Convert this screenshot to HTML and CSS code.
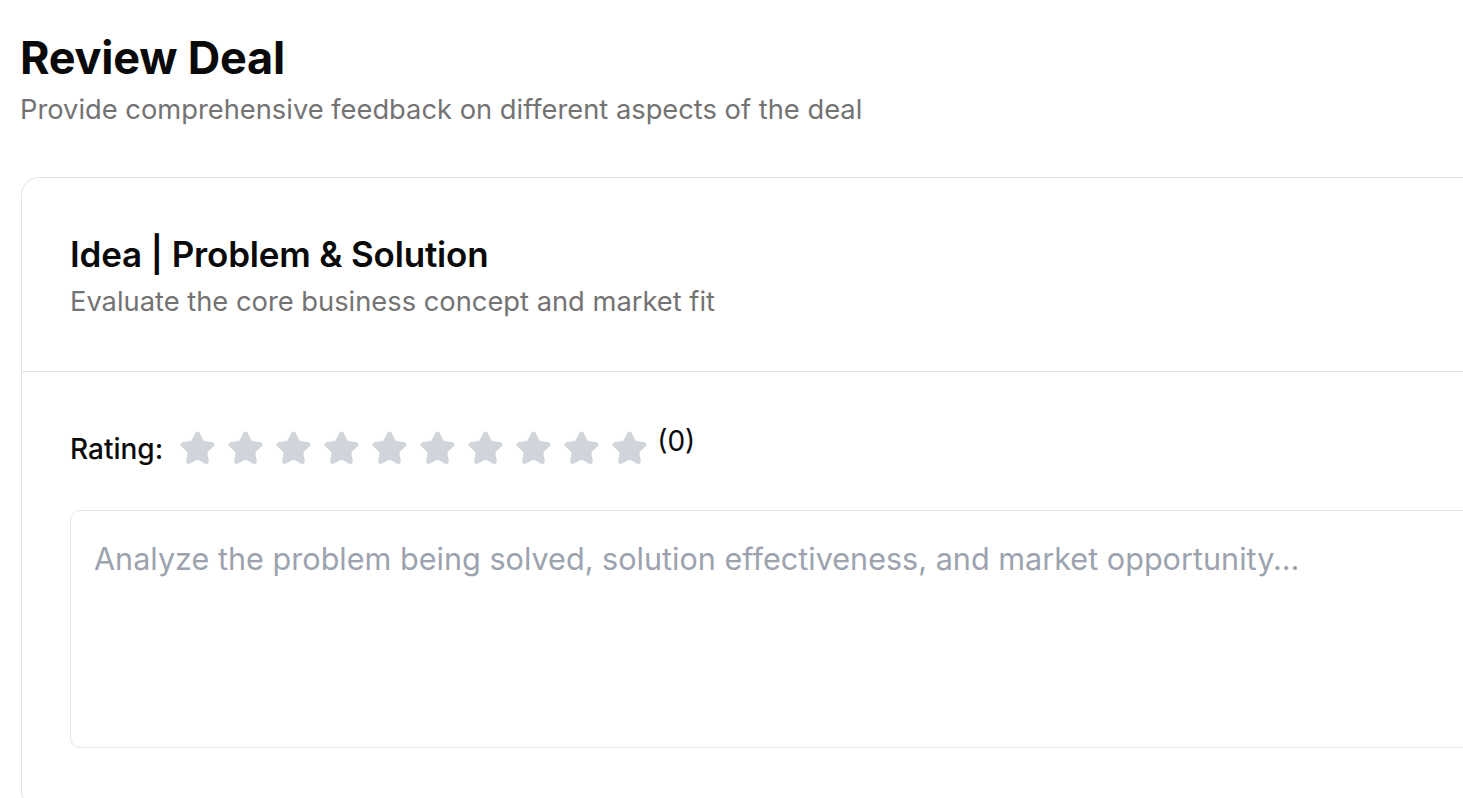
FILE: index.html
```html
<!DOCTYPE html>
<html lang="en">
<head>
<meta charset="utf-8">
<title>Review Deal</title>
<link rel="stylesheet" href="styles.css">
</head>
<body>
<main class="page">
  <header class="page-header">
    <h1 class="page-title">Review Deal</h1>
    <p class="page-subtitle">Provide comprehensive feedback on different aspects of the deal</p>
  </header>

  <section class="card">
    <div class="card-header">
      <h2 class="card-title">Idea | Problem &amp; Solution</h2>
      <p class="card-desc">Evaluate the core business concept and market fit</p>
    </div>
    <div class="card-body">
      <div class="rating-row">
        <span class="rating-label">Rating:</span>
        <div class="stars">
          <svg class="star" viewBox="0 0 24 24"><path d="M11.525 2.295a.53.53 0 0 1 .95 0l2.31 4.679a2.123 2.123 0 0 0 1.595 1.16l5.166.756a.53.53 0 0 1 .294.904l-3.736 3.638a2.123 2.123 0 0 0-.611 1.878l.882 5.14a.53.53 0 0 1-.771.56l-4.618-2.428a2.122 2.122 0 0 0-1.973 0L6.396 21.01a.53.53 0 0 1-.77-.56l.881-5.139a2.122 2.122 0 0 0-.611-1.879L2.16 9.795a.53.53 0 0 1 .294-.906l5.165-.755a2.122 2.122 0 0 0 1.597-1.16z"/></svg>
          <svg class="star" viewBox="0 0 24 24"><path d="M11.525 2.295a.53.53 0 0 1 .95 0l2.31 4.679a2.123 2.123 0 0 0 1.595 1.16l5.166.756a.53.53 0 0 1 .294.904l-3.736 3.638a2.123 2.123 0 0 0-.611 1.878l.882 5.14a.53.53 0 0 1-.771.56l-4.618-2.428a2.122 2.122 0 0 0-1.973 0L6.396 21.01a.53.53 0 0 1-.77-.56l.881-5.139a2.122 2.122 0 0 0-.611-1.879L2.16 9.795a.53.53 0 0 1 .294-.906l5.165-.755a2.122 2.122 0 0 0 1.597-1.160z"/></svg>
          <svg class="star" viewBox="0 0 24 24"><path d="M11.525 2.295a.53.53 0 0 1 .95 0l2.31 4.679a2.123 2.123 0 0 0 1.595 1.16l5.166.756a.53.53 0 0 1 .294.904l-3.736 3.638a2.123 2.123 0 0 0-.611 1.878l.882 5.14a.53.53 0 0 1-.771.56l-4.618-2.428a2.122 2.122 0 0 0-1.973 0L6.396 21.01a.53.53 0 0 1-.77-.56l.881-5.139a2.122 2.122 0 0 0-.611-1.879L2.16 9.795a.53.53 0 0 1 .294-.906l5.165-.755a2.122 2.122 0 0 0 1.597-1.16z"/></svg>
          <svg class="star" viewBox="0 0 24 24"><path d="M11.525 2.295a.53.53 0 0 1 .95 0l2.31 4.679a2.123 2.123 0 0 0 1.595 1.16l5.166.756a.53.53 0 0 1 .294.904l-3.736 3.638a2.123 2.123 0 0 0-.611 1.878l.882 5.14a.53.53 0 0 1-.771.56l-4.618-2.428a2.122 2.122 0 0 0-1.973 0L6.396 21.01a.53.53 0 0 1-.77-.56l.881-5.139a2.122 2.122 0 0 0-.611-1.879L2.16 9.795a.53.53 0 0 1 .294-.906l5.165-.755a2.122 2.122 0 0 0 1.597-1.16z"/></svg>
          <svg class="star" viewBox="0 0 24 24"><path d="M11.525 2.295a.53.53 0 0 1 .95 0l2.31 4.679a2.123 2.123 0 0 0 1.595 1.16l5.166.756a.53.53 0 0 1 .294.904l-3.736 3.638a2.123 2.123 0 0 0-.611 1.878l.882 5.14a.53.53 0 0 1-.771.56l-4.618-2.428a2.122 2.122 0 0 0-1.973 0L6.396 21.01a.53.53 0 0 1-.77-.56l.881-5.139a2.122 2.122 0 0 0-.611-1.879L2.16 9.795a.53.53 0 0 1 .294-.906l5.165-.755a2.122 2.122 0 0 0 1.597-1.16z"/></svg>
          <svg class="star" viewBox="0 0 24 24"><path d="M11.525 2.295a.53.53 0 0 1 .95 0l2.31 4.679a2.123 2.123 0 0 0 1.595 1.16l5.166.756a.53.53 0 0 1 .294.904l-3.736 3.638a2.123 2.123 0 0 0-.611 1.878l.882 5.14a.53.53 0 0 1-.771.56l-4.618-2.428a2.122 2.122 0 0 0-1.973 0L6.396 21.01a.53.53 0 0 1-.77-.56l.881-5.139a2.122 2.122 0 0 0-.611-1.879L2.16 9.795a.53.53 0 0 1 .294-.906l5.165-.755a2.122 2.122 0 0 0 1.597-1.16z"/></svg>
          <svg class="star" viewBox="0 0 24 24"><path d="M11.525 2.295a.53.53 0 0 1 .95 0l2.31 4.679a2.123 2.123 0 0 0 1.595 1.16l5.166.756a.53.53 0 0 1 .294.904l-3.736 3.638a2.123 2.123 0 0 0-.611 1.878l.882 5.14a.53.53 0 0 1-.771.56l-4.618-2.428a2.122 2.122 0 0 0-1.973 0L6.396 21.01a.53.53 0 0 1-.77-.56l.881-5.139a2.122 2.122 0 0 0-.611-1.879L2.16 9.795a.53.53 0 0 1 .294-.906l5.165-.755a2.122 2.122 0 0 0 1.597-1.16z"/></svg>
          <svg class="star" viewBox="0 0 24 24"><path d="M11.525 2.295a.53.53 0 0 1 .95 0l2.31 4.679a2.123 2.123 0 0 0 1.595 1.16l5.166.756a.53.53 0 0 1 .294.904l-3.736 3.638a2.123 2.123 0 0 0-.611 1.878l.882 5.14a.53.53 0 0 1-.771.56l-4.618-2.428a2.122 2.122 0 0 0-1.973 0L6.396 21.01a.53.53 0 0 1-.77-.56l.881-5.139a2.122 2.122 0 0 0-.611-1.879L2.16 9.795a.53.53 0 0 1 .294-.906l5.165-.755a2.122 2.122 0 0 0 1.597-1.16z"/></svg>
          <svg class="star" viewBox="0 0 24 24"><path d="M11.525 2.295a.53.53 0 0 1 .95 0l2.31 4.679a2.123 2.123 0 0 0 1.595 1.16l5.166.756a.53.53 0 0 1 .294.904l-3.736 3.638a2.123 2.123 0 0 0-.611 1.878l.882 5.14a.53.53 0 0 1-.771.56l-4.618-2.428a2.122 2.122 0 0 0-1.973 0L6.396 21.01a.53.53 0 0 1-.77-.56l.881-5.139a2.122 2.122 0 0 0-.611-1.879L2.16 9.795a.53.53 0 0 1 .294-.906l5.165-.755a2.122 2.122 0 0 0 1.597-1.16z"/></svg>
          <svg class="star" viewBox="0 0 24 24"><path d="M11.525 2.295a.53.53 0 0 1 .95 0l2.31 4.679a2.123 2.123 0 0 0 1.595 1.16l5.166.756a.53.53 0 0 1 .294.904l-3.736 3.638a2.123 2.123 0 0 0-.611 1.878l.882 5.14a.53.53 0 0 1-.771.56l-4.618-2.428a2.122 2.122 0 0 0-1.973 0L6.396 21.01a.53.53 0 0 1-.77-.56l.881-5.139a2.122 2.122 0 0 0-.611-1.879L2.16 9.795a.53.53 0 0 1 .294-.906l5.165-.755a2.122 2.122 0 0 0 1.597-1.16z"/></svg>
        </div>
        <span class="rating-count">(0)</span>
      </div>
      <textarea class="notes" placeholder="Analyze the problem being solved, solution effectiveness, and market opportunity..."></textarea>
    </div>
  </section>
</main>
</body>
</html>
```

FILE: styles.css
```css
* { box-sizing: border-box; }

html, body {
  margin: 0;
  padding: 0;
  background: #ffffff;
  overflow: hidden;
}

body {
  font-family: Inter, "Noto Sans", "Liberation Sans", sans-serif;
  color: #0a0a0a;
}

.page {
  padding: 30px 0 0 20px;
  width: 1600px;
}

.page-title {
  margin: 0;
  font-size: 45px;
  line-height: 56px;
  font-weight: 700;
  letter-spacing: -0.005em;
}

.page-subtitle {
  margin: 6px 0 0 0;
  font-size: 27.3px;
  line-height: 36px;
  color: #737373;
}

.card {
  margin-top: 49px;
  margin-left: 1px;
  width: 1540px;
  border: 1.5px solid #e3e3e3;
  border-radius: 18px;
  background: #fff;
}

.card-header {
  padding: 58px 48px 51px;
  border-bottom: 1.5px solid #e3e3e3;
}

.card-title {
  margin: 0;
  font-size: 35px;
  line-height: 36px;
  font-weight: 600;
  letter-spacing: -0.005em;
}

.card-desc {
  margin: 12px 0 0;
  font-size: 27.3px;
  line-height: 36px;
  color: #737373;
}

.card-body {
  padding: 58px 48px 60px;
}

.rating-row {
  display: flex;
  align-items: center;
  height: 37px;
}

.rating-label {
  font-size: 28px;
  line-height: 36px;
  font-weight: 500;
  margin-right: 16px;
}

.stars {
  display: flex;
  gap: 11px;
}

.star {
  width: 37px;
  height: 37px;
  fill: #d1d5db;
  stroke: #d1d5db;
  stroke-width: 2;
  stroke-linejoin: round;
}

.rating-count {
  align-self: flex-start;
  margin-left: 9px;
  margin-top: -3px;
  font-size: 28px;
  line-height: 28px;
}

.notes {
  display: block;
  margin-top: 43px;
  width: 100%;
  height: 238px;
  padding: 28px 23px;
  border: 1.5px solid #e3e5e8;
  border-radius: 10px;
  font-family: Inter, "Noto Sans", "Liberation Sans", sans-serif;
  font-size: 30.6px;
  line-height: 40px;
  color: #0a0a0a;
  resize: none;
  outline: none;
}

.notes::placeholder {
  color: #9ca3af;
}
```
